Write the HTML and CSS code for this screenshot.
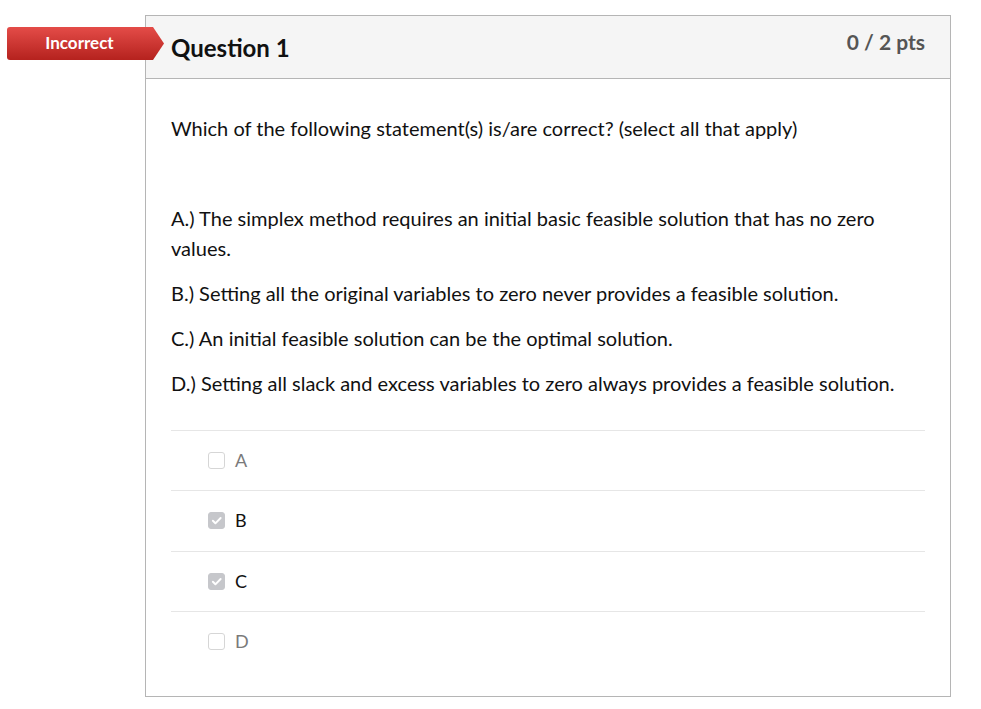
FILE: index.html
```html
<!DOCTYPE html>
<html>
<head>
<meta charset="utf-8">
<link rel="stylesheet" href="styles.css">
</head>
<body>
<div class="page">
  <div class="badge"><span>Incorrect</span></div>
  <div class="card">
    <div class="card-header">
      <h2 class="title">Question 1</h2>
      <div class="points">0 / 2 pts</div>
    </div>
    <div class="card-body">
      <p>Which of the following statement(s) is/are correct? (select all that apply)</p>
      <p>&nbsp;</p>
      <p>A.) The simplex method requires an initial basic feasible solution that has no zero values.</p>
      <p>B.) Setting all the original variables to zero never provides a feasible solution.</p>
      <p>C.) An initial feasible solution can be the optimal solution.</p>
      <p>D.) Setting all slack and excess variables to zero always provides a feasible solution.</p>
      <div class="answers">
        <div class="answer">
          <span class="box"></span><span class="label muted">A</span>
        </div>
        <div class="answer">
          <span class="box checked"><svg viewBox="0 0 16 16" width="16" height="16"><path d="M4 8.3l2.6 2.6L12 5.4" fill="none" stroke="#fff" stroke-width="2" stroke-linecap="round" stroke-linejoin="round"/></svg></span><span class="label">B</span>
        </div>
        <div class="answer">
          <span class="box checked"><svg viewBox="0 0 16 16" width="16" height="16"><path d="M4 8.3l2.6 2.6L12 5.4" fill="none" stroke="#fff" stroke-width="2" stroke-linecap="round" stroke-linejoin="round"/></svg></span><span class="label">C</span>
        </div>
        <div class="answer">
          <span class="box"></span><span class="label muted">D</span>
        </div>
      </div>
    </div>
  </div>
</div>
</body>
</html>
```
FILE: styles.css
```css
* { box-sizing: border-box; }
html, body { margin: 0; padding: 0; background: #fff; }
body { font-family: Lato, "Open Sans", "Liberation Sans", sans-serif; color: #111; }

.page {
  position: relative;
  padding: 15px 0 0 145px;
}

.badge {
  position: absolute;
  left: 7px;
  top: 27px;
  width: 157px;
  height: 33px;
  background: linear-gradient(#e44c48, #b5221e);
  clip-path: polygon(0 0, 146px 0, 100% 50%, 146px 100%, 0 100%);
  border-radius: 3px 0 0 3px;
  display: flex;
  align-items: center;
  padding-right: 12px;
  padding-bottom: 3px;
  justify-content: center;
  color: #fff;
  font-weight: 700;
  font-size: 17px;
  z-index: 2;
}

.card {
  width: 806px;
  height: 682px;
  border: 1px solid #b5b5b5;
}

.card-header {
  height: 63px;
  background: #f5f5f5;
  border-bottom: 1px solid #b5b5b5;
  display: flex;
  justify-content: space-between;
  padding: 0 25px 0 25px;
}

.title {
  margin: 0;
  font-size: 24px;
  font-weight: 700;
  line-height: 28px;
  padding-top: 18px;
  color: #111;
}

.points {
  font-size: 21px;
  font-weight: 700;
  color: #555;
  line-height: 26px;
  padding-top: 13px;
}

.card-body {
  padding: 34px 25px 0 25px;
}

.card-body p {
  margin: 0 0 15px 0;
  font-size: 20px;
  line-height: 30px;
  color: #111;
}

.answers {
  margin-top: 32px;
}

.answer {
  height: 60.3px;
  border-top: 1px solid #e6e6e6;
  display: flex;
  align-items: center;
  padding-left: 37px;
}

.box {
  width: 17px;
  height: 17px;
  border: 1px solid #d6d6d6;
  border-radius: 3px;
  background: #fff;
  display: inline-flex;
}

.box.checked {
  background: #c6c7cb;
  border-color: #c6c7cb;
}

.box svg { display: block; margin: -1px 0 0 -0.5px; width: 17px; height: 17px; }

.label {
  margin-left: 10px;
  font-size: 18px;
  color: #111;
  padding-bottom: 1px;
}

.label.muted { color: #7a7a7a; }
```
